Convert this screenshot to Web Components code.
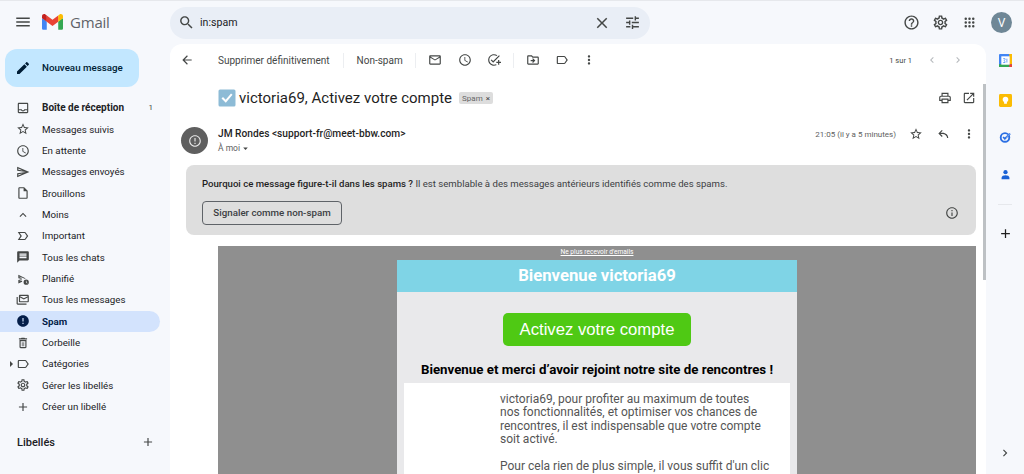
<!DOCTYPE html>
<html lang="fr">
<head>
<meta charset="utf-8">
<title>Gmail - Spam</title>
<style>
  html, body { margin: 0; height: 100%; overflow: hidden; background: #f6f8fc; }
  body { font-family: Roboto, "Liberation Sans", sans-serif; color: #202124; }
</style>
</head>
<body>
<gm-app></gm-app>

<script>
const ICONS = {
  menu: 'M3 18h18v-2H3v2zm0-5h18v-2H3v2zm0-7v2h18V6H3z',
  search: 'M15.5 14h-.79l-.28-.27C15.41 12.59 16 11.11 16 9.5 16 5.91 13.09 3 9.5 3S3 5.91 3 9.5 5.91 16 9.5 16c1.61 0 3.09-.59 4.23-1.57l.27.28v.79l5 4.99L20.49 19l-4.99-5zm-6 0C7.01 14 5 11.99 5 9.5S7.01 5 9.5 5 14 7.01 14 9.5 11.99 14 9.5 14z',
  close: 'M19 6.41L17.59 5 12 10.59 6.41 5 5 6.41 10.59 12 5 17.59 6.41 19 12 13.41 17.59 19 19 17.59 13.41 12z',
  tune: 'M3 17v2h6v-2H3zM3 5v2h10V5H3zm10 16v-2h8v-2h-8v-2h-2v6h2zM7 9v2H3v2h4v2h2V9H7zm14 4v-2H11v2h10zm-6-4h2V7h4V5h-4V3h-2v6z',
  help: 'M11 18h2v-2h-2v2zm1-16C6.48 2 2 6.48 2 12s4.48 10 10 10 10-4.48 10-10S17.52 2 12 2zm0 18c-4.41 0-8-3.59-8-8s3.59-8 8-8 8 3.59 8 8-3.59 8-8 8zm0-14c-2.21 0-4 1.79-4 4h2c0-1.1.9-2 2-2s2 .9 2 2c0 2-3 1.75-3 5h2c0-2.25 3-2.5 3-5 0-2.21-1.79-4-4-4z',
  settings: 'M19.43 12.98c.04-.32.07-.64.07-.98 0-.34-.03-.66-.07-.98l2.11-1.65c.19-.15.24-.42.12-.64l-2-3.46c-.09-.16-.26-.25-.44-.25-.06 0-.12.01-.17.03l-2.49 1c-.52-.4-1.08-.73-1.69-.98l-.38-2.65C14.46 2.18 14.25 2 14 2h-4c-.25 0-.46.18-.49.42l-.38 2.65c-.61.25-1.17.59-1.69.98l-2.49-1c-.06-.02-.12-.03-.18-.03-.17 0-.34.09-.43.25l-2 3.46c-.13.22-.07.49.12.64l2.11 1.65c-.04.32-.07.65-.07.98 0 .33.03.66.07.98l-2.11 1.65c-.19.15-.24.42-.12.64l2 3.46c.09.16.26.25.44.25.06 0 .12-.01.17-.03l2.49-1c.52.4 1.08.73 1.69.98l.38 2.65c.03.24.24.42.49.42h4c.25 0 .46-.18.49-.42l.38-2.65c.61-.25 1.17-.59 1.69-.98l2.49 1c.06.02.12.03.18.03.17 0 .34-.09.43-.25l2-3.46c.12-.22.07-.49-.12-.64l-2.11-1.65zm-1.98-1.71c.04.31.05.52.05.73 0 .21-.02.43-.05.73l-.14 1.13.89.7 1.08.84-.7 1.21-1.27-.51-1.04-.42-.9.68c-.43.32-.84.56-1.25.73l-1.06.43-.16 1.13-.2 1.35h-1.4l-.19-1.35-.16-1.13-1.06-.43c-.43-.18-.83-.41-1.23-.71l-.91-.7-1.06.43-1.27.51-.7-1.21 1.08-.84.89-.7-.14-1.13c-.03-.31-.05-.54-.05-.74s.02-.43.05-.73l.14-1.13-.89-.7-1.08-.84.7-1.21 1.27.51 1.04.42.9-.68c.43-.32.84-.56 1.25-.73l1.06-.43.16-1.13.2-1.35h1.39l.19 1.35.16 1.13 1.06.43c.43.18.83.41 1.23.71l.91.7 1.06-.43 1.27-.51.7 1.21-1.07.85-.89.7.14 1.13zM12 8c-2.21 0-4 1.79-4 4s1.79 4 4 4 4-1.79 4-4-1.79-4-4-4zm0 6c-1.1 0-2-.9-2-2s.9-2 2-2 2 .9 2 2-.9 2-2 2z',
  edit: 'M3 17.25V21h3.75L17.81 9.94l-3.75-3.75L3 17.25zM20.71 7.04c.39-.39.39-1.02 0-1.41l-2.34-2.34c-.39-.39-1.02-.39-1.41 0l-1.83 1.83 3.75 3.75 1.83-1.83z',
  inbox: 'M19 3H5c-1.1 0-2 .9-2 2v14c0 1.1.9 2 2 2h14c1.1 0 2-.9 2-2V5c0-1.1-.9-2-2-2zm0 16H5v-3h3.56c.69 1.19 1.97 2 3.45 2s2.75-.81 3.45-2H19v3zm0-5h-4.99c0 1.1-.9 2-2 2s-2-.9-2-2H5V5h14v9z',
  star: 'M22 9.24l-7.19-.62L12 2 9.19 8.63 2 9.24l5.46 4.73L5.82 21 12 17.27 18.18 21l-1.63-7.03L22 9.24zM12 15.4l-3.76 2.27 1-4.28-3.32-2.88 4.38-.38L12 6.1l1.71 4.04 4.38.38-3.32 2.88 1 4.28L12 15.4z',
  clock: 'M11.99 2C6.47 2 2 6.48 2 12s4.47 10 9.99 10C17.52 22 22 17.52 22 12S17.52 2 11.99 2zM12 20c-4.42 0-8-3.58-8-8s3.58-8 8-8 8 3.58 8 8-3.58 8-8 8zm.5-13H11v6l5.25 3.15.75-1.23-4.5-2.67z',
  send: 'M4.01 6.03l7.51 3.22-7.52-1 .01-2.22m7.5 8.72L4 17.97v-2.22l7.51-1M2.01 3L2 10l15 2-15 2 .01 7L23 12 2.01 3z',
  draft: 'M14 2H6c-1.1 0-1.99.9-1.99 2L4 20c0 1.1.89 2 1.99 2H18c1.1 0 2-.9 2-2V8l-6-6zm4 18H6V4h7v5h5v11z',
  less: 'M12 8l-6 6 1.41 1.41L12 10.83l4.59 4.58L18 14z',
  important: 'M15 19H3l4.5-7L3 5h12c.65 0 1.26.31 1.63.84L21 12l-4.37 6.16c-.37.52-.98.84-1.63.84zm-8.5-2H15l3.5-5L15 7H6.5l3.5 5-3.5 5z',
  chat: 'M20 2H4c-1.1 0-2 .9-2 2v18l4-4h14c1.1 0 2-.9 2-2V4c0-1.1-.9-2-2-2zm-2 12H6v-2h12v2zm0-3H6V9h12v2zm0-3H6V6h12v2z',
  scheduled: 'M4 4.500v6l7 1.500-7 1.500v6l6.500-2.800v-1.900L6 15.800v-1l3.500-.8V10L6 9.200V7.700l9 3.800c.7-.2 1.500-.3 2-.3L4 4.500zM17.500 13a4.500 4.500 0 1 0 0 9 4.500 4.500 0 0 0 0-9zm1.700 6.500L17 18v-3h1v2.500l1.800 1.200-.600.800z',
  allmail: 'M20 3H7c-1.100 0-2 .9-2 2v9c0 1.100.9 2 2 2h13c1.100 0 2-.9 2-2V5c0-1.100-.9-2-2-2zm0 11H7V7.500l6.500 3.500L20 7.500V14zm-6.500-5L7 5.500V5h13v.5L13.500 9zM3 18V7H1v11c0 1.100.9 2 2 2h15v-2H3z',
  error: 'M12 2C6.48 2 2 6.48 2 12s4.48 10 10 10 10-4.48 10-10S17.52 2 12 2zm1 15h-2v-2h2v2zm0-4h-2V7h2v6z',
  erroroutline: 'M11 15h2v2h-2zm0-8h2v6h-2zm1-5C6.47 2 2 6.48 2 12s4.47 10 10 10c5.520 0 10-4.480 10-10S17.520 2 12 2zm0 18c-4.420 0-8-3.580-8-8s3.580-8 8-8 8 3.580 8 8-3.580 8-8 8z',
  trash: 'M6 19c0 1.1.9 2 2 2h8c1.1 0 2-.9 2-2V7H6v12zM8 9h8v10H8V9zm2 1.500h1.200v7H10zm2.800 0H14v7h-1.200zM15.500 4l-1-1h-5l-1 1H5v2h14V4z',
  label: 'M17.63 5.84C17.27 5.33 16.67 5 16 5L5 5.01C3.9 5.01 3 5.9 3 7v10c0 1.1.9 1.99 2 1.99L16 19c.67 0 1.27-.33 1.63-.84L22 12l-4.37-6.16zM16 17H5V7h11l3.55 5L16 17z',
  add: 'M19 13h-6v6h-2v-6H5v-2h6V5h2v6h6v2z',
  back: 'M20 11H7.83l5.59-5.59L12 4l-8 8 8 8 1.41-1.41L7.83 13H20v-2z',
  mail: 'M20 4H4c-1.1 0-2 .9-2 2v12c0 1.1.9 2 2 2h16c1.1 0 2-.9 2-2V6c0-1.1-.9-2-2-2zm0 14H4V8l8 5 8-5v10zm-8-7L4 6h16l-8 5z',
  addtask: 'M22 5.18L10.59 16.6l-4.24-4.24 1.41-1.41 2.83 2.83 10-10L22 5.18zM12 20c-4.41 0-8-3.59-8-8s3.59-8 8-8c1.57 0 3.04.46 4.28 1.25l1.45-1.45C16.1 2.67 14.13 2 12 2 6.48 2 2 6.48 2 12s4.48 10 10 10c1.73 0 3.36-.44 4.78-1.22l-1.5-1.5c-1 .46-2.11.72-3.28.72zm7-5h-3v2h3v3h2v-3h3v-2h-3v-3h-2v3z',
  move: 'M20 6h-8l-2-2H4c-1.1 0-2 .9-2 2v12c0 1.1.9 2 2 2h16c1.1 0 2-.9 2-2V8c0-1.1-.9-2-2-2zm0 12H4V6h5.17l2 2H20v10zm-8.01-9l-1.41 1.41L12.16 12H8v2h4.16l-1.59 1.59L11.99 17 16 13.01 11.99 9z',
  more: 'M12 8c1.1 0 2-.9 2-2s-.9-2-2-2-2 .9-2 2 .9 2 2 2zm0 2c-1.1 0-2 .9-2 2s.9 2 2 2 2-.9 2-2-.9-2-2-2zm0 6c-1.1 0-2 .9-2 2s.9 2 2 2 2-.9 2-2-.9-2-2-2z',
  print: 'M19 8h-1V3H6v5H5c-1.66 0-3 1.34-3 3v6h4v4h12v-4h4v-6c0-1.66-1.34-3-3-3zM8 5h8v3H8V5zm8 12v2H8v-4h8v2zm2-2v-2H6v2H4v-4c0-.55.45-1 1-1h14c.55 0 1 .45 1 1v4h-2z',
  open: 'M19 19H5V5h7V3H5c-1.11 0-2 .9-2 2v14c0 1.1.89 2 2 2h14c1.1 0 2-.9 2-2v-7h-2v7zM14 3v2h3.59l-9.83 9.83 1.41 1.41L19 6.41V10h2V3h-7z',
  reply: 'M21 19c0-5-4-9-10-9H7.830l3.580-3.590L10 5l-6 6 6 6 1.410-1.410L7.830 12H11c4.500 0 8 3 8 7h2z',
  info: 'M11 7h2v2h-2zm0 4h2v6h-2zm1-9C6.48 2 2 6.48 2 12s4.48 10 10 10 10-4.48 10-10S17.52 2 12 2zm0 18c-4.41 0-8-3.59-8-8s3.59-8 8-8 8 3.59 8 8-3.59 8-8 8z',
  prev: 'M15.41 7.41L14 6l-6 6 6 6 1.41-1.41L10.83 12z',
  next: 'M10 6L8.59 7.41 13.17 12l-4.58 4.59L10 18l6-6z',
  caret: 'M7 10l5 5 5-5z',
  apps: 'M6 4a2 2 0 1 0 0 4 2 2 0 0 0 0-4zm6 0a2 2 0 1 0 0 4 2 2 0 0 0 0-4zm6 0a2 2 0 1 0 0 4 2 2 0 0 0 0-4zM6 10a2 2 0 1 0 0 4 2 2 0 0 0 0-4zm6 0a2 2 0 1 0 0 4 2 2 0 0 0 0-4zm6 0a2 2 0 1 0 0 4 2 2 0 0 0 0-4zM6 16a2 2 0 1 0 0 4 2 2 0 0 0 0-4zm6 0a2 2 0 1 0 0 4 2 2 0 0 0 0-4zm6 0a2 2 0 1 0 0 4 2 2 0 0 0 0-4z'
};

// Material icon, name + size + colour from attributes
class GmIcon extends HTMLElement {
  connectedCallback() {
    const size = this.getAttribute('size') || 15;
    const color = this.getAttribute('color') || '#444746';
    const box = this.getAttribute('box') || size;
    this.attachShadow({ mode: 'open' }).innerHTML = `
      <style>
        :host { display: inline-flex; align-items: center; justify-content: center; flex: none; width: ${box}px; height: ${box}px; }
        svg { display: block; fill: ${color}; }
      </style>
      <svg width="${size}" height="${size}" viewBox="0 0 24 24"><path d="${ICONS[this.getAttribute('name')]}"/></svg>
    `;
  }
}
customElements.define('gm-icon', GmIcon);

class GmTopbar extends HTMLElement {
  connectedCallback() {
    this.attachShadow({ mode: 'open' }).innerHTML = `
      <style>
        :host { display: flex; align-items: center; height: 44px; box-sizing: border-box; border-top: 1px solid #e6e8ec; }
        .brand { width: 170px; display: flex; align-items: center; padding-left: 14px; padding-bottom: 2px; box-sizing: border-box; flex: none; }
        .logo { margin-left: 10px; display: block; }
        .word { margin-left: 7px; font: 400 15px "Open Sans", Roboto, sans-serif; color: #5f6368; letter-spacing: -.2px; }
        .search { width: 480px; height: 32px; border-radius: 16px; background: #e9eef6; display: flex; align-items: center; padding: 0 8px 0 7px; box-sizing: border-box; flex: none; }
        .query { flex: 1; margin-left: 5px; font-size: 10.6px; color: #202124; }
        .right { margin-left: auto; display: flex; align-items: center; padding-right: 12px; }
        .right gm-icon { margin-right: 11px; }
        .right gm-icon:nth-child(3) { margin-right: 13px; }
        .avatar { width: 21px; height: 21px; border-radius: 50%; background: #6f8796; color: #fff; font-size: 12px; display: flex; align-items: center; justify-content: center; }
      </style>
      <div class="brand">
        <gm-icon name="menu" size="18"></gm-icon>
        <svg class="logo" width="21" height="16" viewBox="0 0 256 193">
          <path fill="#4285F4" d="M58.182 192.05V93.14L27.507 65.077 0 49.504v125.091c0 9.658 7.825 17.455 17.455 17.455h40.727Z"/>
          <path fill="#34A853" d="M197.818 192.05h40.727c9.659 0 17.455-7.826 17.455-17.455V49.505l-31.156 17.837-27.026 25.798v98.91Z"/>
          <path fill="#EA4335" d="m58.182 93.14-4.174-38.647 4.174-36.989L128 69.868l69.818-52.364 4.67 34.992-4.67 40.644L128 145.504z"/>
          <path fill="#FBBC04" d="M197.818 17.504V93.14L256 49.504V26.231c0-21.585-24.64-33.89-41.89-20.945l-16.292 12.218Z"/>
          <path fill="#C5221F" d="m0 49.504 26.759 20.07L58.182 93.14V17.504L41.89 5.286C24.61-7.66 0 4.646 0 26.23v23.273Z"/>
        </svg>
        <span class="word">Gmail</span>
      </div>
      <div class="search">
        <gm-icon name="search" size="17" box="18"></gm-icon>
        <span class="query">in:spam</span>
        <gm-icon name="close" size="18" box="18"></gm-icon>
        <gm-icon name="tune" size="17" box="19" style="margin-left:12px"></gm-icon>
      </div>
      <div class="right">
        <gm-icon name="help" size="17" box="18"></gm-icon>
        <gm-icon name="settings" size="17" box="18"></gm-icon>
        <gm-icon name="apps" size="15" box="18"></gm-icon>
        <div class="avatar">V</div>
      </div>
    `;
  }
}
customElements.define('gm-topbar', GmTopbar);

class GmNavItem extends HTMLElement {
  connectedCallback() {
    const icon = this.getAttribute('icon');
    const count = this.getAttribute('count');
    const color = this.hasAttribute('active') ? '#041e49' : '#444746';
    this.attachShadow({ mode: 'open' }).innerHTML = `
      <style>
        :host { display: flex; align-items: center; height: 21.33px; width: 160px; padding-left: 15px; box-sizing: border-box; border-radius: 0 11px 11px 0; font-size: 9.75px; color: #202124; position: relative; }
        :host([active]) { background: #d3e3fd; color: #041e49; font-weight: 700; }
        :host([strong]) { font-weight: 700; font-size: 10px; }
        .label { margin-left: 11px; flex: 1; white-space: nowrap; }
        .count { font-size: 8px; font-weight: 400; margin-right: 7px; color: #444746; }
        .tri { position: absolute; left: 10px; top: 8px; width: 0; height: 0; border-left: 3px solid #444746; border-top: 3px solid transparent; border-bottom: 3px solid transparent; }
      </style>
      ${this.hasAttribute('expand') ? '<span class="tri"></span>' : ''}
      <gm-icon name="${icon}" size="14" box="16" color="${color}"></gm-icon>
      <span class="label"><slot></slot></span>
      ${count ? `<span class="count">${count}</span>` : ''}
    `;
  }
}
customElements.define('gm-nav-item', GmNavItem);

class GmSidebar extends HTMLElement {
  connectedCallback() {
    this.attachShadow({ mode: 'open' }).innerHTML = `
      <style>
        :host { display: block; width: 170px; flex: none; }
        .compose { margin: 5px 0 0 5px; width: 134px; height: 38px; box-sizing: border-box; padding-bottom: 1px; border-radius: 12px; background: #c2e7ff; display: flex; align-items: center; padding-left: 10px; font-size: 9.75px; font-weight: 500; color: #001d35; }
        .compose span { margin-left: 11px; }
        nav { margin-top: 10.3px; }
        .labels { margin: 18px 15px 0 17px; display: flex; justify-content: space-between; align-items: center; font-size: 11px; font-weight: 500; color: #202124; }
      </style>
      <div class="compose"><gm-icon name="edit" size="16" box="16" color="#001d35"></gm-icon><span>Nouveau message</span></div>
      <nav>
        <gm-nav-item icon="inbox" strong count="1">Boîte de réception</gm-nav-item>
        <gm-nav-item icon="star">Messages suivis</gm-nav-item>
        <gm-nav-item icon="clock">En attente</gm-nav-item>
        <gm-nav-item icon="send">Messages envoyés</gm-nav-item>
        <gm-nav-item icon="draft">Brouillons</gm-nav-item>
        <gm-nav-item icon="less">Moins</gm-nav-item>
        <gm-nav-item icon="important">Important</gm-nav-item>
        <gm-nav-item icon="chat">Tous les chats</gm-nav-item>
        <gm-nav-item icon="scheduled">Planifié</gm-nav-item>
        <gm-nav-item icon="allmail">Tous les messages</gm-nav-item>
        <gm-nav-item icon="error" active>Spam</gm-nav-item>
        <gm-nav-item icon="trash">Corbeille</gm-nav-item>
        <gm-nav-item icon="label" expand>Catégories</gm-nav-item>
        <gm-nav-item icon="settings">Gérer les libellés</gm-nav-item>
        <gm-nav-item icon="add">Créer un libellé</gm-nav-item>
      </nav>
      <div class="labels"><span>Libellés</span><gm-icon name="add" size="14" box="14"></gm-icon></div>
    `;
  }
}
customElements.define('gm-sidebar', GmSidebar);

class GmToolbar extends HTMLElement {
  connectedCallback() {
    this.attachShadow({ mode: 'open' }).innerHTML = `
      <style>
        :host { display: flex; align-items: center; height: 32px; padding-left: 10px; padding-right: 22px; color: #444746; font-size: 10px; }
        .btn { white-space: nowrap; }
        .sep { width: 1px; height: 15px; background: #eceef1; flex: none; }
        .pager { margin-left: auto; display: flex; align-items: center; font-size: 7.5px; }
      </style>
      <gm-icon name="back" size="14" box="14"></gm-icon>
      <span class="btn" style="margin-left:24px">Supprimer définitivement</span>
      <span class="sep" style="margin:0 13px"></span>
      <span class="btn">Non-spam</span>
      <span class="sep" style="margin:0 12px"></span>
      <gm-icon name="mail" size="14" box="14"></gm-icon>
      <gm-icon name="clock" size="14" box="14" style="margin-left:16px"></gm-icon>
      <gm-icon name="addtask" size="14" box="14" style="margin-left:15px"></gm-icon>
      <span class="sep" style="margin:0 12px"></span>
      <gm-icon name="move" size="14" box="14"></gm-icon>
      <gm-icon name="label" size="14" box="14" style="margin-left:15px"></gm-icon>
      <gm-icon name="more" size="14" box="14" style="margin-left:13px"></gm-icon>
      <div class="pager">
        <span>1 sur 1</span>
        <gm-icon name="prev" size="12" box="12" color="#b4b7bb" style="margin-left:14px"></gm-icon>
        <gm-icon name="next" size="12" box="12" color="#b4b7bb" style="margin-left:14px"></gm-icon>
      </div>
    `;
  }
}
customElements.define('gm-toolbar', GmToolbar);

class GmMessageHead extends HTMLElement {
  connectedCallback() {
    this.attachShadow({ mode: 'open' }).innerHTML = `
      <style>
        :host { display: block; }
        .subject { display: flex; align-items: center; height: 28px; margin-top: 8px; padding-left: 48px; padding-right: 10px; }
        .subject h1 { margin: 0 0 0 3px; font: 400 15px Roboto, sans-serif; color: #1f1f1f; white-space: nowrap; }
        .chip { margin-left: 7px; height: 12px; padding: 0 3px; background: #dddddd; border-radius: 2px; font-size: 8px; color: #666; display: flex; align-items: center; gap: 3px; }
        .chip i { font-style: normal; font-size: 8px; color: #444; }
        .tools { margin-left: auto; display: flex; gap: 10px; }
        .sender { display: flex; align-items: flex-start; margin-top: 15px; padding: 0 10px 0 11px; }
        .avatar { width: 27px; height: 27px; border-radius: 50%; background: #5f5f5f; display: flex; align-items: center; justify-content: center; flex: none; }
        .who { margin-left: 10px; }
        .name { font-size: 10.2px; font-weight: 500; line-height: 14px; color: #1f1f1f; }
        .to { font-size: 8.5px; line-height: 13px; margin-top: 1px; color: #5e5e5e; display: flex; align-items: center; }
        .meta { margin-left: auto; display: flex; align-items: center; height: 14px; font-size: 8px; color: #5e5e5e; }
      </style>
      <div class="subject">
        <svg width="18" height="18" viewBox="0 0 18 18"><rect x="0.5" y="0.5" width="17" height="17" rx="1.500" fill="#8dbbd6"/><path d="M3.500 9.500l1.500-1.500 2.700 2.700 5.300-6.200 1.500 1.300-6.700 8z" fill="#fff"/></svg>
        <h1>victoria69, Activez votre compte</h1>
        <span class="chip">Spam <i>×</i></span>
        <div class="tools">
          <gm-icon name="print" size="14" box="14"></gm-icon>
          <gm-icon name="open" size="14" box="14"></gm-icon>
        </div>
      </div>
      <div class="sender">
        <div class="avatar"><gm-icon name="erroroutline" size="14" box="14" color="#e8e8e8"></gm-icon></div>
        <div class="who">
          <div class="name">JM Rondes &lt;support-fr@meet-bbw.com&gt;</div>
          <div class="to">À moi <gm-icon name="caret" size="11" box="11"></gm-icon></div>
        </div>
        <div class="meta">
          <span>21:05 (il y a 5 minutes)</span>
          <gm-icon name="star" size="14" box="14" style="margin-left:13px"></gm-icon>
          <gm-icon name="reply" size="14" box="14" style="margin-left:13px"></gm-icon>
          <gm-icon name="more" size="14" box="14" style="margin-left:12px"></gm-icon>
        </div>
      </div>
    `;
  }
}
customElements.define('gm-message-head', GmMessageHead);

class GmSpamNotice extends HTMLElement {
  connectedCallback() {
    this.attachShadow({ mode: 'open' }).innerHTML = `
      <style>
        :host { display: block; margin: 10px 10px 0 16px; height: 70px; box-sizing: border-box; padding: 12px 16px 0; background: #dedede; border-radius: 8px; font-size: 9.6px; color: #3c4043; }
        p { margin: 0; line-height: 14px; }
        b { font-weight: 500; color: #1f1f1f; }
        .row { display: flex; align-items: center; justify-content: space-between; margin-top: 10px; padding-right: 1px; }
        button { all: unset; box-sizing: border-box; width: 140px; height: 24px; border: 1px solid #5f6368; border-radius: 4px; text-align: center; font: 500 9.75px/22px Roboto, sans-serif; color: #3c4043; }
      </style>
      <p><b>Pourquoi ce message figure-t-il dans les spams ?</b> Il est semblable à des messages antérieurs identifiés comme des spams.</p>
      <div class="row"><button>Signaler comme non-spam</button><gm-icon name="info" size="14" box="14"></gm-icon></div>
    `;
  }
}
customElements.define('gm-spam-notice', GmSpamNotice);

class GmMailBody extends HTMLElement {
  connectedCallback() {
    this.attachShadow({ mode: 'open' }).innerHTML = `
      <style>
        :host { display: block; margin: 11px 10px 0 48px; background: #8f8f8f; height: 300px; }
        .unsub { display: block; text-align: center; height: 14px; font-size: 6.6px; line-height: 13px; color: #fff; text-decoration: underline; }
        .sheet { width: 400px; margin: 0 auto; background: #e9e9eb; height: 260px; padding-bottom: 10px; }
        .banner { height: 32px; line-height: 32px; background: #7fd4e6; text-align: center; color: #fff; font-size: 16.7px; font-weight: 700; }
        .cta { display: block; width: 188px; height: 33px; margin: 21px auto 0; border-radius: 5px; background: #4fc914; color: #fff; text-align: center; font: 400 16.7px/33px "Liberation Sans", Arial, sans-serif; }
        h2 { margin: 15px 0 5px; font-size: 13.3px; line-height: 17px; font-weight: 700; text-align: center; color: #000; }
        .box { margin: 0 7px; background: #fff; padding: 10px 0 0 96px; height: 200px; font-size: 12px; line-height: 13.4px; color: #555; }
        .box p { margin: 0 0 13.4px; }
      </style>
      <span class="unsub">Ne plus recevoir d'emails</span>
      <div class="sheet">
        <div class="banner">Bienvenue victoria69</div>
        <span class="cta">Activez votre compte</span>
        <h2>Bienvenue et merci d’avoir rejoint notre site de rencontres !</h2>
        <div class="box">
          <p>victoria69, pour profiter au maximum de toutes<br>nos fonctionnalités, et optimiser vos chances de<br>rencontres, il est indispensable que votre compte<br>soit activé.</p>
          <p>Pour cela rien de plus simple, il vous suffit d'un clic</p>
        </div>
      </div>
    `;
  }
}
customElements.define('gm-mail-body', GmMailBody);

class GmAddons extends HTMLElement {
  connectedCallback() {
    this.attachShadow({ mode: 'open' }).innerHTML = `
      <style>
        :host { display: flex; flex-direction: column; align-items: center; width: 38px; flex: none; box-sizing: border-box; }
        svg { display: block; }
        .item { height: 37px; display: flex; align-items: center; justify-content: center; }
        .item.first { height: 32px; margin-bottom: 5.5px; }
        .rule { width: 14px; height: 1px; background: #e6e8ec; margin-top: 11.5px; }
        .plus { margin-top: 21px; }
        .end { margin-top: auto; margin-bottom: 14px; }
      </style>
      <div class="item first"><svg width="13" height="13" viewBox="0 0 14 14">
        <rect width="14" height="14" rx="1" fill="#4285f4"/><rect x="11" width="3" height="11" fill="#fbbc04"/><rect y="11" width="11" height="3" fill="#34a853"/><rect x="11" y="11" width="3" height="3" fill="#ea4335"/><rect x="2.500" y="2.500" width="9" height="9" fill="#fff"/>
        <path d="M4.500 5h2v1l-1 1 1 1v1.200h-2M8.500 5v4.200" fill="none" stroke="#4285f4" stroke-width=".8"/>
      </svg></div>
      <div class="item"><svg width="13" height="13" viewBox="0 0 14 14">
        <rect width="14" height="14" rx="1.500" fill="#fbbc04"/><circle cx="7" cy="6" r="3" fill="#fff"/><rect x="5.500" y="8.500" width="3" height="2" fill="#fff"/>
      </svg></div>
      <div class="item"><svg width="12" height="12" viewBox="0 0 14 14">
        <circle cx="7" cy="7.500" r="5" fill="none" stroke="#2b6fe3" stroke-width="2.200"/><path d="M4.800 7l2 2L13 3" fill="none" stroke="#2b6fe3" stroke-width="2"/><path d="M8 8l5-5" stroke="#8ab4f8" stroke-width="1"/>
      </svg></div>
      <div class="item"><svg width="11" height="11" viewBox="0 0 14 14">
        <circle cx="7" cy="4" r="2.700" fill="#1a62d6"/><path d="M2 13v-1.800C2 9 4.500 8 7 8s5 1 5 3.200V13z" fill="#1a62d6"/>
      </svg></div>
      <div class="rule"></div>
      <gm-icon class="plus" name="add" size="17" box="15" color="#1f1f1f"></gm-icon>
      <gm-icon class="end" name="next" size="14" box="14"></gm-icon>
    `;
  }
}
customElements.define('gm-addons', GmAddons);

class GmApp extends HTMLElement {
  connectedCallback() {
    this.attachShadow({ mode: 'open' }).innerHTML = `
      <style>
        :host { display: flex; flex-direction: column; height: 474px; overflow: hidden; background: #f6f8fc; }
        .main { display: flex; flex: 1; min-height: 0; }
        .card { flex: 1; min-width: 0; background: #fff; border-radius: 12px 12px 0 0; overflow: hidden; position: relative; }
        .scroll { position: absolute; right: 0; top: 40px; width: 3px; height: 196px; background: #bdc1c4; }
      </style>
      <gm-topbar></gm-topbar>
      <div class="main">
        <gm-sidebar></gm-sidebar>
        <section class="card">
          <gm-toolbar></gm-toolbar>
          <gm-message-head></gm-message-head>
          <gm-spam-notice></gm-spam-notice>
          <gm-mail-body></gm-mail-body>
          <div class="scroll"></div>
        </section>
        <gm-addons></gm-addons>
      </div>
    `;
  }
}
customElements.define('gm-app', GmApp);
</script>
</body>
</html>
